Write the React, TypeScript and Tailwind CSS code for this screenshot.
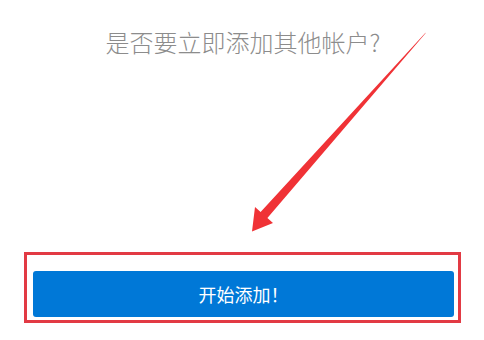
import React from "react";

export default function App() {
  return (
    <div
      className="relative w-[484px] h-[340px] bg-white overflow-hidden"
      style={{ fontFamily: '"Noto Sans CJK SC", "Noto Sans", sans-serif' }}
    >
      <div className="flex flex-col h-full">
        <div className="pt-[26px] pl-[2px] text-center text-[24px] leading-[32px] font-light text-[#8c8c8c]">
          是否要立即添加其他帐户?
        </div>
        <button className="mt-[213px] ml-[33px] w-[421px] h-[46px] rounded-[3px] bg-[#0078d7] text-white text-[18px] leading-[24px] flex items-center justify-center">
          开始添加！
        </button>
      </div>

      {/* annotation: red frame */}
      <div className="absolute left-[24px] top-[252px] w-[437px] h-[71px] border-[3px] border-[#e23a44]" />

      {/* annotation: red arrow */}
      <svg
        className="absolute left-0 top-0"
        width="484"
        height="340"
        viewBox="0 0 484 340"
      >
        <polygon
          points="426.2,32.4 267.4,218 273,222.9 252,231.5 255,207.1 260.6,212 424.8,33.6"
          fill="#f03236"
        />
      </svg>
    </div>
  );
}
